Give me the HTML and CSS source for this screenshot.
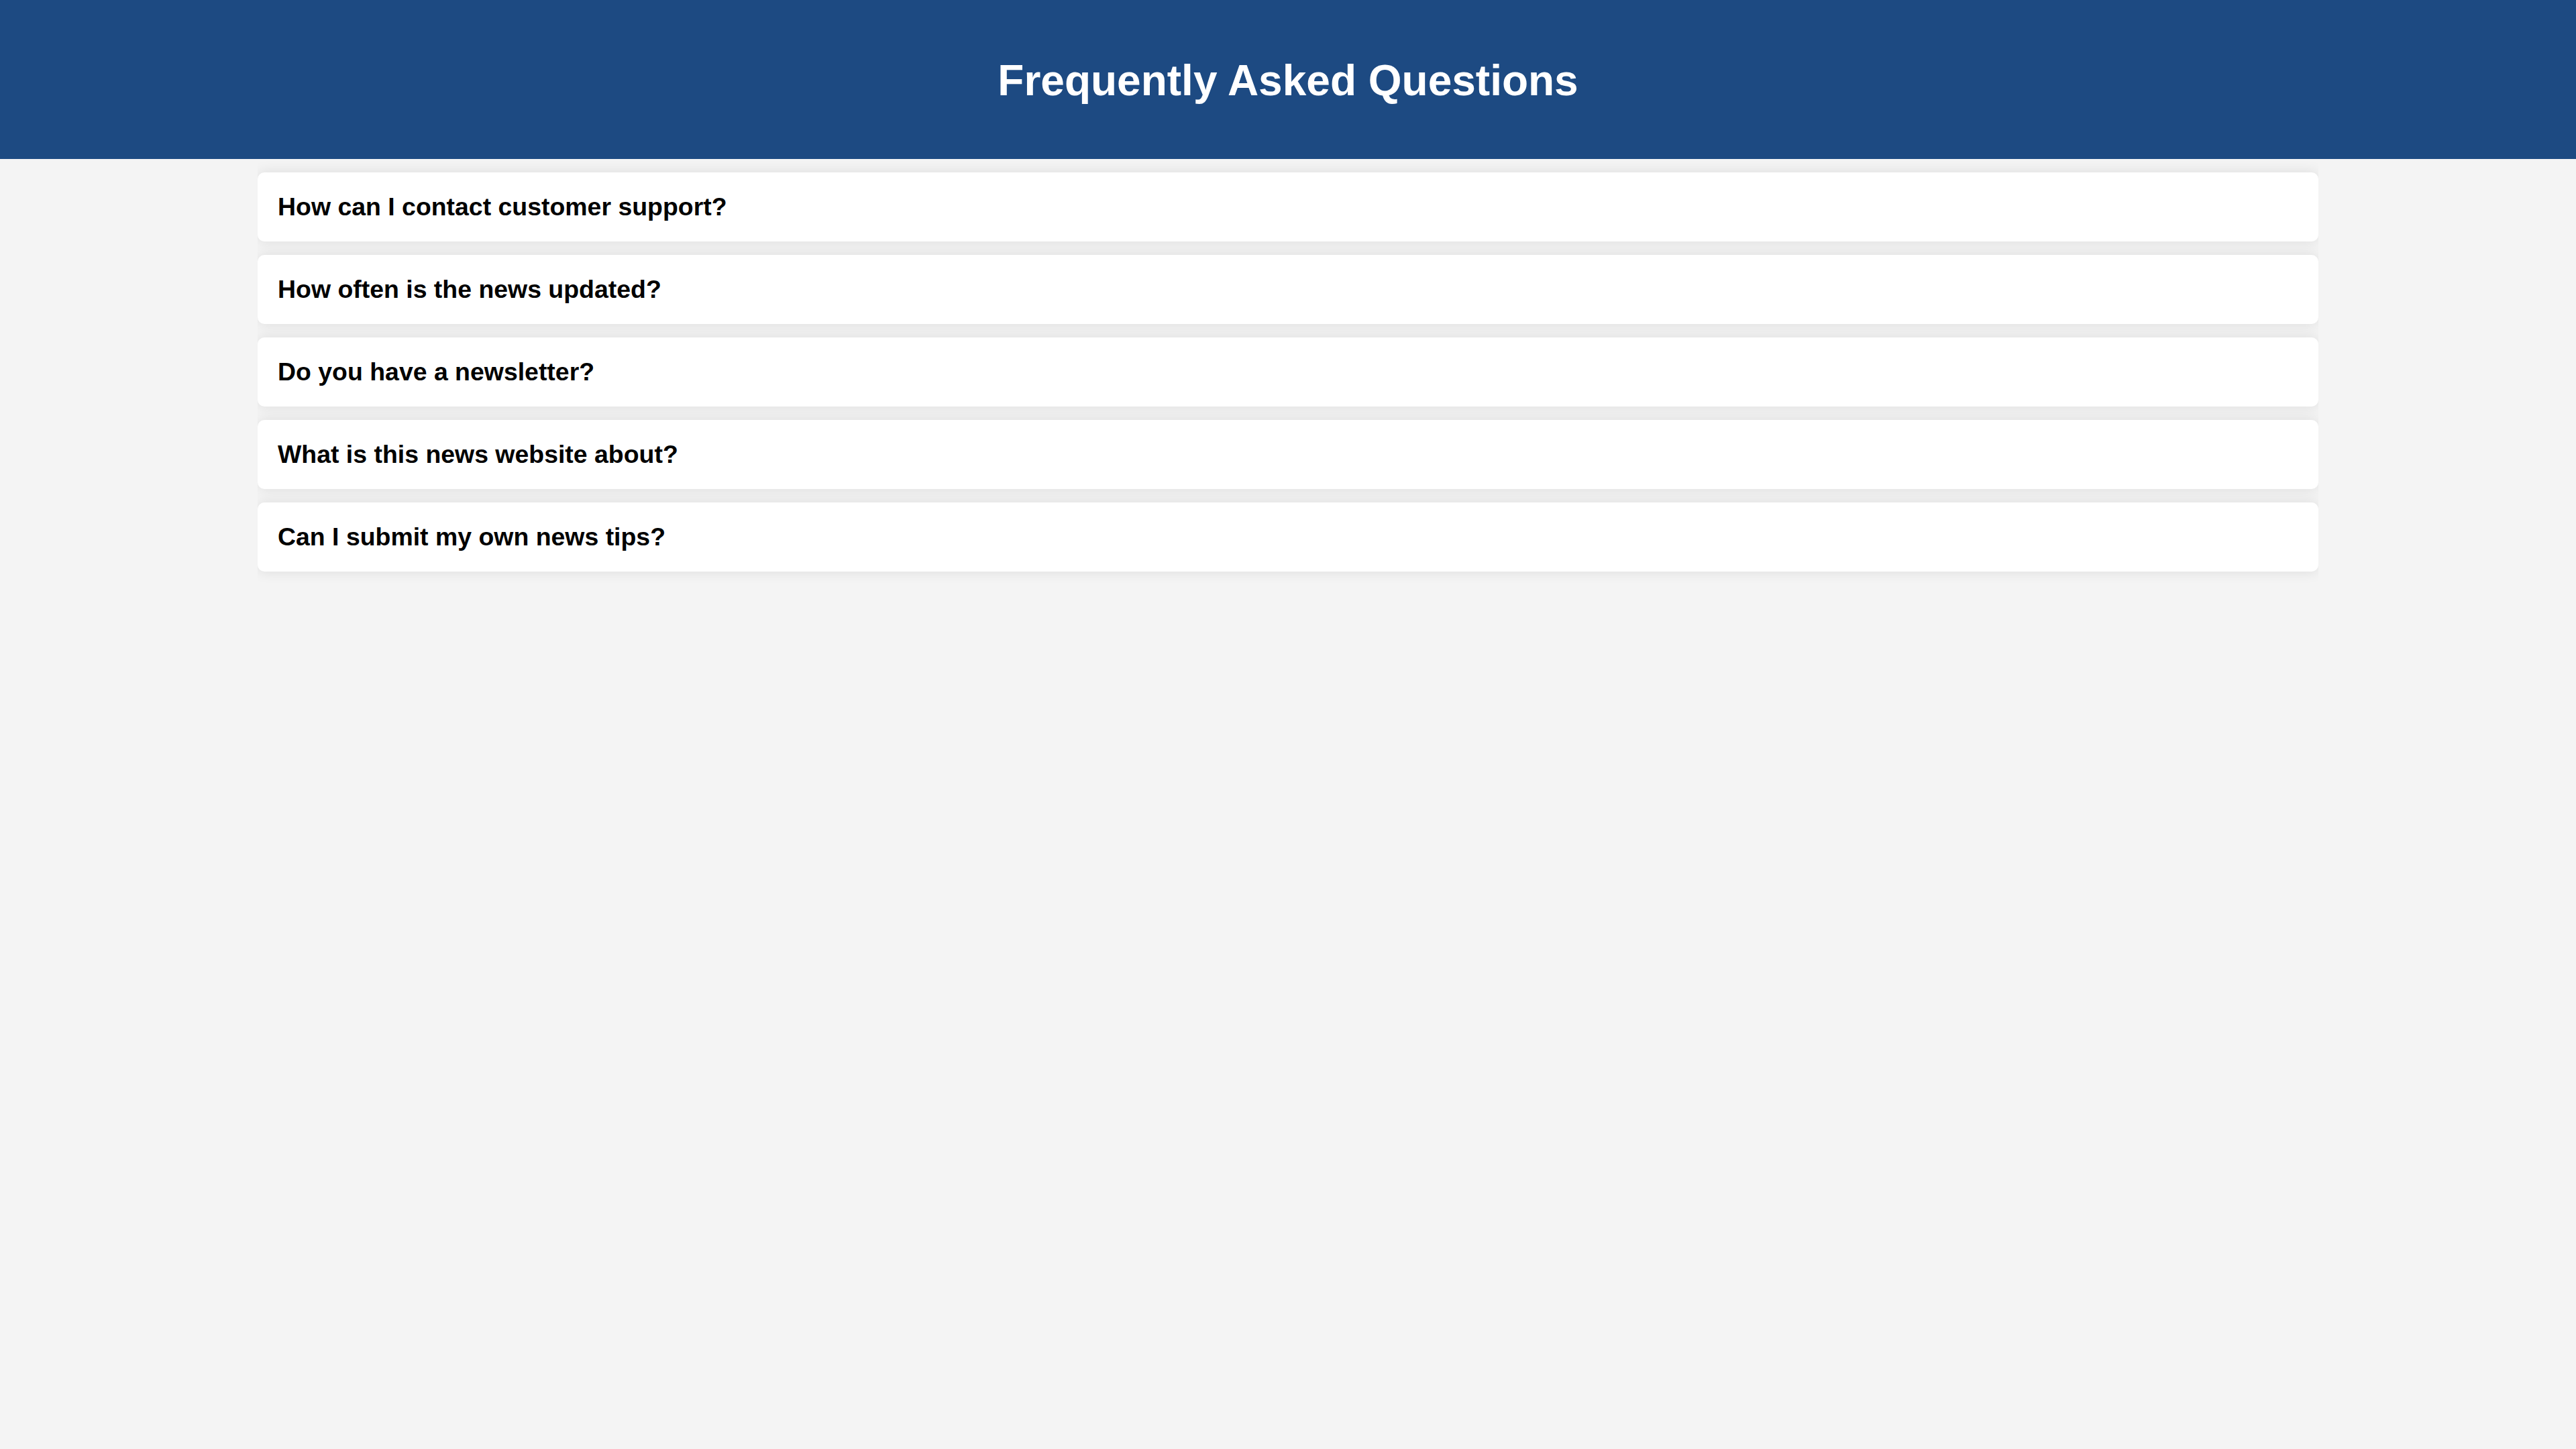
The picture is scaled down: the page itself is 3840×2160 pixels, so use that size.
FILE: index.html
```html
<!DOCTYPE html>
<html lang="en">
<head>
  <meta charset="utf-8">
  <meta name="viewport" content="width=device-width, initial-scale=1">
  <title>Frequently Asked Questions</title>
  <link rel="stylesheet" href="styles.css">
</head>
<body>
  <header class="page-header">
    <h1 class="page-title">Frequently Asked Questions</h1>
  </header>
  <main class="faq-list">
    <h3 class="faq-item"><button class="faq-question" type="button">How can I contact customer support?</button></h3>
    <h3 class="faq-item"><button class="faq-question" type="button">How often is the news updated?</button></h3>
    <h3 class="faq-item"><button class="faq-question" type="button">Do you have a newsletter?</button></h3>
    <h3 class="faq-item"><button class="faq-question" type="button">What is this news website about?</button></h3>
    <h3 class="faq-item"><button class="faq-question" type="button">Can I submit my own news tips?</button></h3>
  </main>
</body>
</html>
```

FILE: styles.css
```css
* {
  box-sizing: border-box;
}

body {
  margin: 0;
  background: #f4f4f4;
  color: #000;
  font-family: "Liberation Sans", Arial, sans-serif;
  font-size: 32px;
}

.page-header {
  padding: 84px 40px 80px;
  background: #1d4a82;
  color: #fff;
  text-align: center;
}

.page-title {
  margin: 0;
  font-size: 2em;
  line-height: 73px;
}

.faq-list {
  display: flex;
  flex-direction: column;
  gap: 20px;
  width: 80%;
  margin: 0 auto;
  padding: 20px 0;
  overflow: hidden;
}

.faq-item {
  margin: 0;
  border-radius: 10px;
  background: #fff;
  box-shadow: 0 0 20px rgba(0, 0, 0, 0.1);
  font-size: 1.17em;
  line-height: 43px;
}

.faq-question {
  display: block;
  width: 100%;
  padding: 30px;
  border: 0;
  background: none;
  color: inherit;
  font: inherit;
  text-align: left;
  cursor: pointer;
}
```
